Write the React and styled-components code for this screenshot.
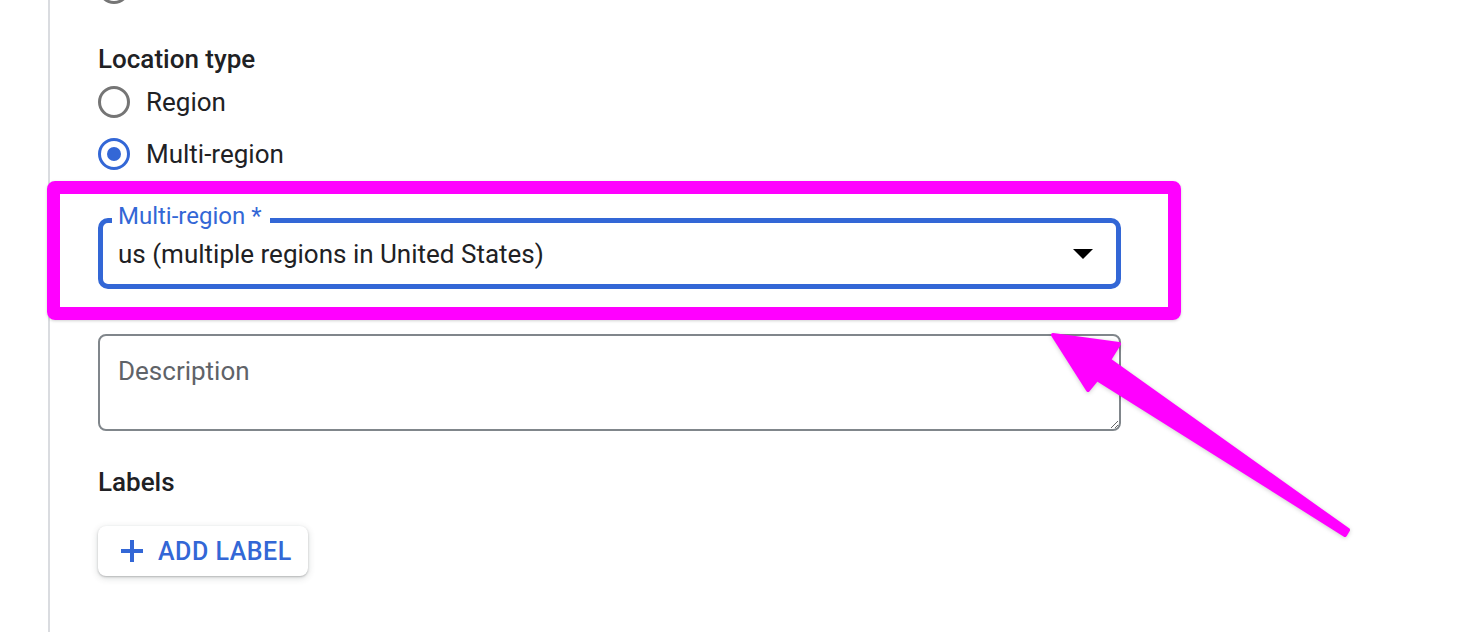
import React from 'react';
import styled, { createGlobalStyle } from 'styled-components';

const GlobalStyle = createGlobalStyle`
    body {
    margin: 0;
    background: #fff;
    font-family: Roboto, "Liberation Sans", sans-serif;
    color: #202124;
    }
`;

const Page = styled.div`
    position: relative;
    height: 632px;
    overflow: hidden;
    padding-left: 48px;
    box-sizing: border-box;
`;

const Rail = styled.div`
    height: 100%;
    border-left: 2px solid #dadce0;
    padding-left: 48px;
`;

const Form = styled.div`
    width: 1023px;
    display: flex;
    flex-direction: column;
`;

const Heading = styled.div`
    font-size: 26px;
    font-weight: 500;
    line-height: 32px;
    margin-top: ${p => p.top}px;
`;

const RadioRow = styled.label`
    display: flex;
    align-items: center;
    gap: 16px;
    height: 52px;
    font-size: 26px;
    margin-top: ${p => p.top || 0}px;
`;

const Radio = styled.span`
    width: 32px;
    height: 32px;
    box-sizing: border-box;
    border-radius: 50%;
    border: 3px solid ${p => (p.checked ? '#3367d6' : '#757575')};
    display: flex;
    align-items: center;
    justify-content: center;
    &::after {
    content: '';
    width: 14px;
    height: 14px;
    border-radius: 50%;
    background: ${p => (p.checked ? '#3367d6' : 'transparent')};
    }
`;

const Select = styled.div`
    position: relative;
    margin-top: 38px;
    height: 71px;
    box-sizing: border-box;
    border: 5px solid #3367d6;
    border-radius: 10px;
    display: flex;
    align-items: center;
    justify-content: space-between;
    padding: 0 23px 0 15px;
    font-size: 26px;
    line-height: 60px;
`;

const FloatLabel = styled.span`
    position: absolute;
    left: 9px;
    top: -19px;
    padding: 0 8px 0 6px;
    background: #fff;
    color: #3367d6;
    font-size: 24px;
    line-height: 24px;
`;

const Caret = styled.span`
    width: 0;
    height: 0;
    border-left: 10px solid transparent;
    border-right: 10px solid transparent;
    border-top: 10px solid #000;
`;

const Description = styled.textarea`
    margin-top: 45px;
    height: 97px;
    box-sizing: border-box;
    border: 2px solid #80868b;
    border-radius: 8px;
    padding: 19px 18px;
    font-family: Roboto, "Liberation Sans", sans-serif;
    font-size: 26px;
    line-height: 32px;
    color: #202124;
    resize: vertical;
    outline: none;
    &::placeholder {
    color: #5f6368;
    }
`;

const AddButton = styled.button`
    align-self: flex-start;
    margin-top: 28px;
    height: 50px;
    display: flex;
    align-items: center;
    gap: 14px;
    padding: 0 16px 0 22px;
    border: none;
    border-radius: 8px;
    background: #fff;
    box-shadow: 0 1px 2px rgba(60, 64, 67, 0.3), 0 2px 6px 1px rgba(60, 64, 67, 0.15);
    color: #3367d6;
    font-family: Roboto, "Liberation Sans", sans-serif;
    font-size: 25px;
    font-weight: 500;
    letter-spacing: 0.5px;
`;

const Highlight = styled.div`
    position: absolute;
    left: 47px;
    top: 181px;
    width: 1134px;
    height: 139px;
    box-sizing: border-box;
    border: 13px solid #ff00ff;
    border-radius: 8px;
    box-shadow: 0 1px 3px rgba(0, 0, 0, 0.18);
    pointer-events: none;
`;

const ArrowLayer = styled.svg`
    position: absolute;
    left: 0;
    top: 0;
    pointer-events: none;
    filter: drop-shadow(0 1px 2px rgba(0, 0, 0, 0.2));
`;

function PlusIcon() {
    return (
        <svg width="24" height="24" viewBox="0 0 24 24">
            <path d="M12 1v22M1 12h22" stroke="#3367d6" strokeWidth="4" fill="none" />
        </svg>
    );
}

function App() {
    return (
        <Page>
            <GlobalStyle />
            <Rail>
                <Form>
                    <RadioRow top={-38}>
                        <Radio />
                    </RadioRow>
                    <Heading top={29}>Location type</Heading>
                    <RadioRow top={1}>
                        <Radio />
                        Region
                    </RadioRow>
                    <RadioRow>
                        <Radio checked />
                        Multi-region
                    </RadioRow>
                    <Select>
                        <FloatLabel>Multi-region *</FloatLabel>
                        <span>us (multiple regions in United States)</span>
                        <Caret />
                    </Select>
                    <Description placeholder="Description" />
                    <Heading top={35}>Labels</Heading>
                    <AddButton>
                        <PlusIcon />
                        ADD LABEL
                    </AddButton>
                </Form>
            </Rail>
            <Highlight />
            <ArrowLayer width="1464" height="632">
                <path
                    d="M1053 335 L1119 344 L1109 360 L1348 530 L1345 535 L1097 379 L1088 390 Z"
                    fill="#ff00ff"
                    stroke="#ff00ff"
                    strokeWidth="4"
                    strokeLinejoin="round"
                />
            </ArrowLayer>
        </Page>
    );
}

export default App;
